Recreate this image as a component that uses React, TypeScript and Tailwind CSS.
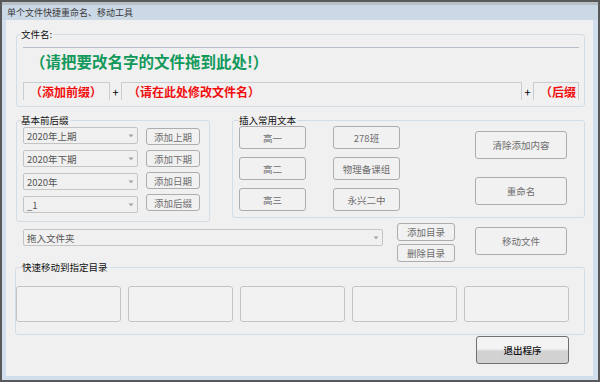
import type { ReactNode } from "react";

function GroupBox({
  label,
  labelClass,
  className,
  children,
}: {
  label: string;
  labelClass: string;
  className: string;
  children?: ReactNode;
}) {
  return (
    <div className={`relative shrink-0 border border-[#d3dde6] rounded-[3px] ${className}`}>
      <span
        className={`absolute top-[-7px] bg-[#f0f0f0] pr-[1px] text-[9.5px] leading-[12px] text-[#111] whitespace-nowrap ${labelClass}`}
      >
        {label}
      </span>
      {children}
    </div>
  );
}

function Btn({ children, className }: { children?: ReactNode; className: string }) {
  return (
    <div
      className={`shrink-0 flex items-center justify-center border border-[#adadad] rounded-[3px] bg-[#f1f1f1] text-[9.5px] leading-[12px] text-[#6e6e6e] whitespace-nowrap ${className}`}
    >
      {children}
    </div>
  );
}

function Combo({ text, className }: { text: string; className: string }) {
  return (
    <div
      className={`shrink-0 flex items-center justify-between border border-[#c4c4c4] rounded-[2px] bg-[#f0f0f0] pl-[3px] pr-[3px] ${className}`}
    >
      <span className="text-[9.5px] leading-[12px] text-[#555] whitespace-nowrap">{text}</span>
      <svg width="6" height="4" viewBox="0 0 6 4">
        <path d="M0.5 0.5 L3 3.2 L5.5 0.5 Z" fill="#a0a0a0" />
      </svg>
    </div>
  );
}

function Field({ children, className }: { children?: ReactNode; className: string }) {
  return (
    <div
      className={`shrink-0 h-[18px] border border-b-0 border-[#c9ced3] pl-[6px] text-[12px] font-bold leading-[17px] text-[#f20d0d] overflow-hidden whitespace-nowrap ${className}`}
    >
      {children}
    </div>
  );
}

export default function App() {
  return (
    <div className="w-[600px] h-[382px] border-2 border-[#595959] bg-[#d2deeb] flex flex-col overflow-hidden font-['Noto_Sans_CJK_SC',sans-serif]">
      <div className="h-[18px] shrink-0 bg-[#cbd8e6] border-t-[3px] border-[#b9c0c8] flex items-center pl-[5px] text-[9px] leading-[12px] text-[#3a3a3a]">
        单个文件快捷重命名、移动工具
      </div>

      <div className="ml-[4px] mr-[5px] h-[356px] shrink-0 bg-[#f0f0f0] flex flex-col items-start">
        {/* 文件名 */}
        <GroupBox label="文件名:" labelClass="left-[4px]" className="ml-[10px] mt-[14px] w-[569px] h-[73px]">
          <div className="ml-[6px] mt-[12px] w-[556px] h-[30px] border-t border-[#b7bec5] pl-[7px] text-[15.5px] font-bold leading-[26px] text-[#12995b] whitespace-nowrap">
            （请把要改名字的文件拖到此处!）
          </div>
          <div className="flex items-start ml-[6px] mt-[5px]">
            <Field className="w-[87px]">（添加前缀）</Field>
            <span className="w-[11px] shrink-0 text-center text-[11px] leading-[20px] text-black">+</span>
            <Field className="w-[401px]">（请在此处修改文件名）</Field>
            <span className="w-[11px] shrink-0 text-center text-[11px] leading-[20px] text-black">+</span>
            <Field className="w-[46px]">（后缀</Field>
          </div>
        </GroupBox>

        {/* 前后缀 + 常用文本 */}
        <div className="flex items-start mt-[13px]">
          <GroupBox label="基本前后缀" labelClass="left-[4px]" className="ml-[10px] w-[194px] h-[102px]">
            <div className="flex items-start">
              <div className="flex flex-col gap-[6px] ml-[6px] mt-[6px]">
                <Combo text="2020年上期" className="w-[115px] h-[17px]" />
                <Combo text="2020年下期" className="w-[115px] h-[17px]" />
                <Combo text="2020年" className="w-[115px] h-[17px]" />
                <Combo text="_1" className="w-[115px] h-[17px]" />
              </div>
              <div className="flex flex-col gap-[5px] ml-[8px] mt-[7px]">
                <Btn className="w-[54px] h-[17px]">添加上期</Btn>
                <Btn className="w-[54px] h-[17px]">添加下期</Btn>
                <Btn className="w-[54px] h-[17px]">添加日期</Btn>
                <Btn className="w-[54px] h-[17px]">添加后缀</Btn>
              </div>
            </div>
          </GroupBox>

          <GroupBox label="插入常用文本" labelClass="left-[6px]" className="ml-[22px] w-[353px] h-[98px]">
            <div className="flex items-start">
              <div className="flex flex-col gap-[8px] ml-[6px] mt-[5px]">
                <Btn className="w-[67px] h-[23px]">高一</Btn>
                <Btn className="w-[67px] h-[23px]">高二</Btn>
                <Btn className="w-[67px] h-[23px]">高三</Btn>
              </div>
              <div className="flex flex-col gap-[8px] ml-[27px] mt-[5px]">
                <Btn className="w-[67px] h-[23px]">278班</Btn>
                <Btn className="w-[67px] h-[23px]">物理备课组</Btn>
                <Btn className="w-[67px] h-[23px]">永兴二中</Btn>
              </div>
              <div className="flex flex-col gap-[18px] ml-[75px] mt-[10px]">
                <Btn className="w-[92px] h-[28px]">清除添加内容</Btn>
                <Btn className="w-[92px] h-[28px]">重命名</Btn>
              </div>
            </div>
          </GroupBox>
        </div>

        {/* 目录 */}
        <div className="flex items-start">
          <Combo text="拖入文件夹" className="ml-[17px] mt-[7px] w-[360px] h-[17px]" />
          <div className="flex flex-col gap-[3px] ml-[14px] mt-[1px]">
            <Btn className="w-[58px] h-[18px]">添加目录</Btn>
            <Btn className="w-[58px] h-[18px]">删除目录</Btn>
          </div>
          <Btn className="ml-[20px] mt-[5px] w-[92px] h-[28px]">移动文件</Btn>
        </div>

        <GroupBox label="快速移动到指定目录" labelClass="left-[6px]" className="ml-[9px] mt-[5px] w-[570px] h-[68px]">
          <div className="flex gap-[7px] mt-[18px]">
            <div className="w-[105px] h-[36px] border border-[#bfc4c9] rounded-[3px] bg-[#f2f2f2]" />
            <div className="w-[105px] h-[36px] border border-[#bfc4c9] rounded-[3px] bg-[#f2f2f2]" />
            <div className="w-[105px] h-[36px] border border-[#bfc4c9] rounded-[3px] bg-[#f2f2f2]" />
            <div className="w-[105px] h-[36px] border border-[#bfc4c9] rounded-[3px] bg-[#f2f2f2]" />
            <div className="w-[105px] h-[36px] border border-[#bfc4c9] rounded-[3px] bg-[#f2f2f2]" />
          </div>
        </GroupBox>

        <div className="ml-[470px] mt-[1px] w-[93px] h-[28px] shrink-0 flex items-center justify-center border border-[#707070] rounded-[3px] bg-linear-to-b from-[#f3f3f3] from-45% to-[#d2d2d2] to-55% text-[9.5px] font-medium leading-[12px] text-[#111]">
          退出程序
        </div>
      </div>
    </div>
  );
}
